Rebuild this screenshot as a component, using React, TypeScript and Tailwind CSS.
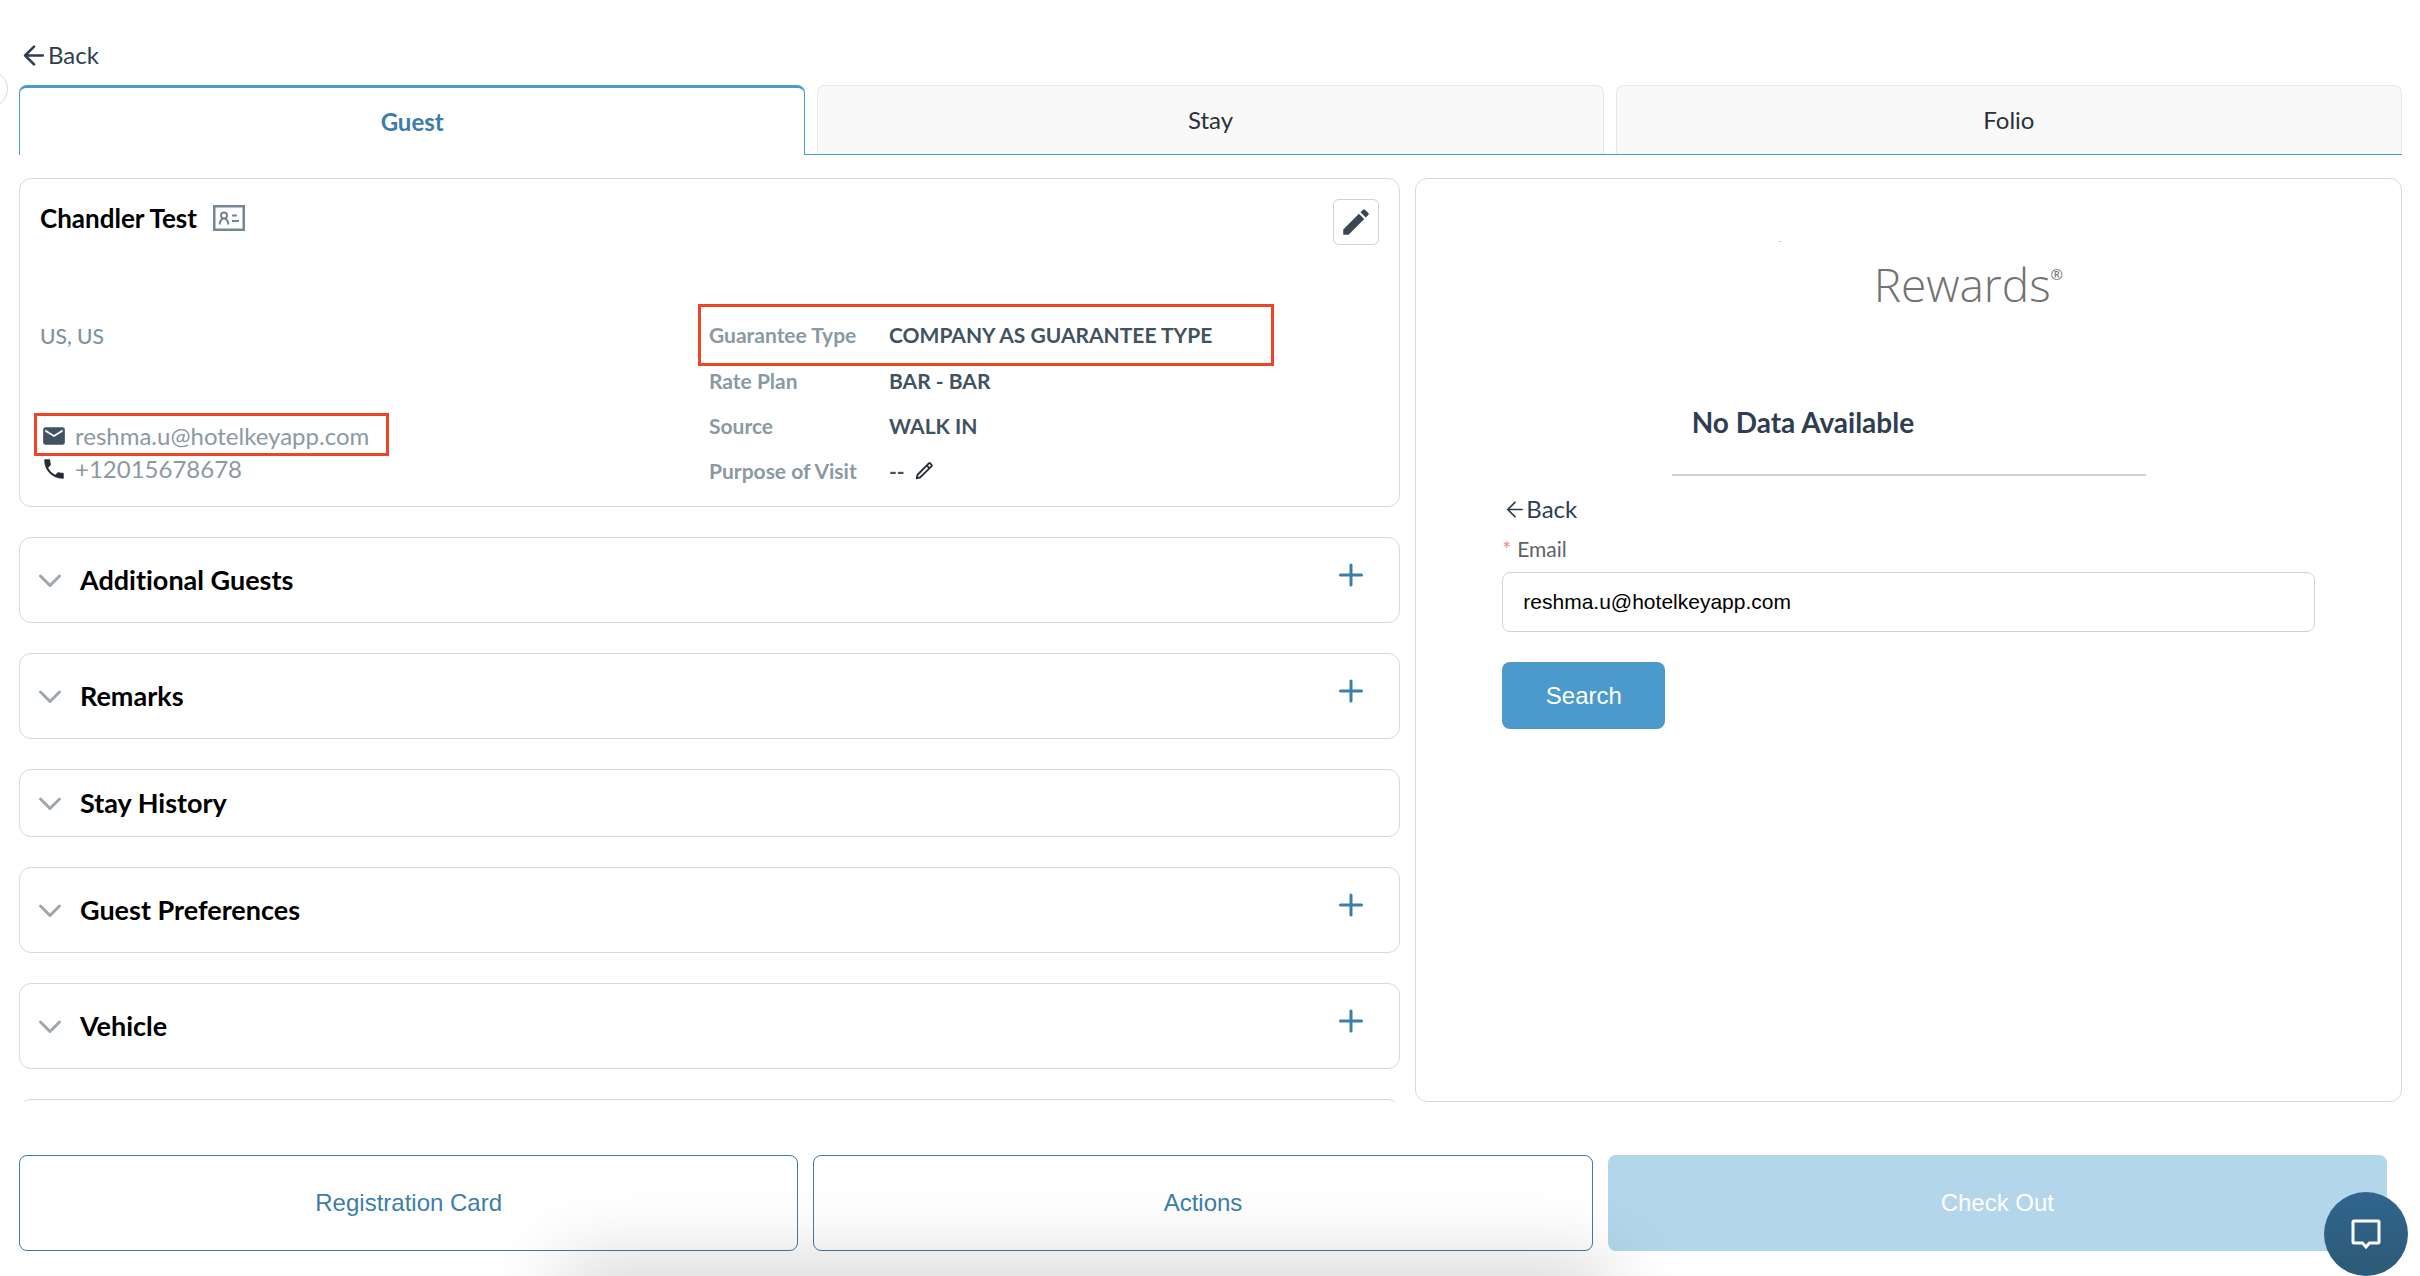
import { BiPencil } from "react-icons/bi";
import { MdEdit, MdEmail, MdPhone } from "react-icons/md";

const sections = [
  { title: "Additional Guests", canAdd: true },
  { title: "Remarks", canAdd: true },
  { title: "Stay History", canAdd: false },
  { title: "Guest Preferences", canAdd: true },
  { title: "Vehicle", canAdd: true },
];

const details = [
  { label: "Rate Plan", value: "BAR - BAR" },
  { label: "Source", value: "WALK IN" },
  { label: "Purpose of Visit", value: "--", editable: true },
];

function ArrowIcon({ size, weight }: { size: number; weight: number }) {
  return (
    <svg width={size} height={size} viewBox="0 0 20 20" fill="none" stroke="currentColor" strokeWidth={weight} strokeLinecap="round" strokeLinejoin="round" aria-hidden="true">
      <path d="M10.500 1.500 2 10l8.500 8.500M2 10h17" />
    </svg>
  );
}

function IdCardIcon() {
  return (
    <svg width="32" height="26" viewBox="0 0 32 26" fill="none" stroke="#748691" strokeWidth="2" aria-hidden="true">
      <rect x="1" y="1" width="30" height="24" strokeWidth="3" />
      <circle cx="11" cy="10.500" r="3" />
      <path d="M6.500 19.500c.5-3.500 2-6 4.500-6s4 2.500 4.500 6M19 10.500h5M19 16h7" />
    </svg>
  );
}

function ChevronIcon() {
  return (
    <svg width="24" height="16" viewBox="0 0 24 16" fill="none" stroke="#9ba8ad" strokeWidth="3" strokeLinecap="round" strokeLinejoin="round" aria-hidden="true">
      <path d="M2.500 4 12 13.500 21.500 4" />
    </svg>
  );
}

function PlusIcon() {
  return (
    <svg width="24" height="24" viewBox="0 0 24 24" stroke="#3c7ea9" strokeWidth="3" strokeLinecap="round" aria-hidden="true">
      <path d="M12 2v20M1.500 12h21" />
    </svg>
  );
}

function Section({ title, canAdd }: { title: string; canAdd: boolean }) {
  return (
    <section
      className={`flex shrink-0 items-center rounded-xl border border-[#d9d9d9] pl-[18px] pr-9 ${canAdd ? "h-[86px]" : "h-[68px]"}`}
    >
      <button type="button" className="flex flex-1 items-center gap-[18px] text-left text-[27px] leading-8 font-bold text-black">
        <ChevronIcon />
        <span>{title}</span>
      </button>
      {canAdd && (
        <button type="button" aria-label={`Add ${title}`} className="pb-[10px]">
          <PlusIcon />
        </button>
      )}
    </section>
  );
}

function GuestCard() {
  return (
    <section className="shrink-0 rounded-xl border border-[#d9d9d9] px-5 pt-5 pb-5">
      <div className="flex h-[105px] items-start justify-between">
        <div className="flex items-center gap-4 pt-[3px]">
          <h1 className="text-[26px] leading-8 font-bold text-black">Chandler Test</h1>
          <IdCardIcon />
        </div>
        <button type="button" aria-label="Edit guest" className="flex size-[46px] items-center justify-center rounded-md border border-[#cfd5d9] text-[#3d4752]">
          <MdEdit size={34} />
        </button>
      </div>

      <div className="flex">
        <div className="w-[658px] text-[#8a9aa3]">
          <p className="pt-4 text-[21px] leading-8 font-medium text-[#82929c]">US, US</p>
          <div className="mt-[61px] -ml-[6px] flex h-[43px] w-[355px] items-center gap-2 border-3 border-[#ee4427] pt-[2px] pl-1 text-[24px] leading-8">
            <MdEmail size={26} className="text-[#3f5361]" />
            <a href="mailto:reshma.u@hotelkeyapp.com">reshma.u@hotelkeyapp.com</a>
          </div>
          <div className="flex items-center gap-2 pl-[1px] text-[24px] leading-[26px]">
            <MdPhone size={26} className="text-[#252d38]" />
            <a href="tel:+12015678678">+12015678678</a>
          </div>
        </div>

        <dl className="w-[576px] text-[21px] leading-[30px] font-bold text-[#3f5361]">
          <div className="flex h-[62px] items-center border-3 border-[#ee4427] pl-2">
            <dt className="w-[180px] text-[#8a9aa3]">Guarantee Type</dt>
            <dd>COMPANY AS GUARANTEE TYPE</dd>
          </div>
          <div className="flex flex-col gap-[15px] pl-[11px]">
            {details.map((item) => (
              <div key={item.label} className="flex items-center">
                <dt className="w-[180px] text-[#8a9aa3]">{item.label}</dt>
                <dd className="flex items-center gap-2">
                  {item.value}
                  {item.editable && (
                    <button type="button" aria-label="Edit purpose of visit">
                      <BiPencil size={22} className="text-[#252d38]" />
                    </button>
                  )}
                </dd>
              </div>
            ))}
          </div>
        </dl>
      </div>
    </section>
  );
}

function RewardsPanel() {
  return (
    <aside className="rounded-xl border border-[#d9d9d9] px-[86px] pt-[62px]">
      <div className="mx-auto w-[474px]">
        <div className="ml-[106px] h-px w-1 bg-[#e9d5d8]" />
        <p className="mt-[14px] pl-[202px] font-['Open_Sans',sans-serif] text-[46px] leading-[56px] font-light text-[#737373]">
          Rewards<sup className="top-[-22px] text-[15px] font-normal">®</sup>
        </p>
        <div className="mt-[92px] border-b-2 border-[#ccd4da] pb-[34px] pl-5">
          <h2 className="text-[28px] leading-9 font-bold text-[#2e3e50]">No Data Available</h2>
        </div>
      </div>

      <button type="button" className="mt-[17px] flex items-center gap-[3px] pl-1 text-[24px] leading-8 text-[#2e3e50]">
        <ArrowIcon size={17} weight={2} />
        Back
      </button>
      <form onSubmit={(e) => e.preventDefault()}>
        <label htmlFor="email" className="mt-2 block text-[21px] leading-8 text-[#5f6366]">
          <span className="mr-[6px] text-[#f28b82]">*</span>Email
        </label>
        <input
          id="email"
          type="email"
          defaultValue="reshma.u@hotelkeyapp.com"
          className="mt-[7px] block h-[60px] w-full rounded-lg border border-[#d2d5d7] px-5 font-['Liberation_Sans',sans-serif] text-[21px] text-black"
        />
        <button type="submit" className="mt-[30px] h-[67px] w-[163px] rounded-lg bg-[#4c9acc] font-['Liberation_Sans',sans-serif] text-[24px] text-white">
          Search
        </button>
      </form>
    </aside>
  );
}

export default function App() {
  return (
    <div className="relative flex h-screen flex-col overflow-hidden bg-white pt-[35px] pl-[19px] pr-[18px] font-[Lato,sans-serif] [font-variant-ligatures:none]">
      {/* edge of the collapsed side menu toggle */}
      <div className="absolute top-[71px] -left-[28px] size-9 rounded-full border border-[#d9d9d9]" />

      <header>
        <button type="button" className="flex items-center gap-1 pl-1 text-[24px] leading-10 text-[#2e3e50]">
          <ArrowIcon size={21} weight={2.4} />
          Back
        </button>
      </header>

      <nav className="mt-[10px] flex h-[70px] text-[24px]">
        <button type="button" className="w-[calc((100%-24px)/3)] rounded-t-lg border-x border-t-3 border-[#4c9acc] font-bold text-[#3c7ea9]">
          Guest
        </button>
        <div className="flex flex-1 gap-3 border-b border-[#4c9acc] pl-3">
          <button type="button" className="flex-1 rounded-t-lg border border-b-0 border-[#e8e8e8] bg-[#f9f9f9] text-[#2b3138]">
            Stay
          </button>
          <button type="button" className="flex-1 rounded-t-lg border border-b-0 border-[#e8e8e8] bg-[#f9f9f9] text-[#2b3138]">
            Folio
          </button>
        </div>
      </nav>

      <main className="mt-[23px] grid min-h-0 flex-1 grid-cols-[minmax(0,7fr)_minmax(0,5fr)] gap-[15px]">
        <div className="flex min-h-0 flex-col gap-[30px] overflow-hidden">
          <GuestCard />
          {sections.map((section) => (
            <Section key={section.title} {...section} />
          ))}
          <div className="h-[86px] shrink-0 rounded-xl border border-[#d9d9d9]" />
        </div>
        <RewardsPanel />
      </main>

      <footer className="mt-[53px] mb-[25px] mr-[15px] grid h-24 shrink-0 grid-cols-3 gap-[15px] font-['Liberation_Sans',sans-serif] text-[24px] text-[#3c7ea9]">
        <button type="button" className="rounded-lg border border-[#3c7ea9]">Registration Card</button>
        <button type="button" className="rounded-lg border border-[#3c7ea9]">Actions</button>
        <button type="button" disabled className="rounded-lg bg-[#b3d6ea] text-white">Check Out</button>
      </footer>

      <div className="pointer-events-none absolute top-full right-[820px] left-[570px] h-10 shadow-[0_0_80px_10px_rgba(0,0,0,0.2)]" />

      <button type="button" aria-label="Open chat" className="absolute right-3 bottom-0 flex size-[84px] items-center justify-center rounded-full bg-linear-to-b from-[#31658e] to-[#2c5a76]">
        <svg width="32" height="32" viewBox="0 0 32 32" fill="none" stroke="white" strokeWidth="3" aria-hidden="true">
          <path d="M4 3h24a1 1 0 0 1 1 1v20a1 1 0 0 1-1 1h-8.500L16 29l-3.500-4H4a1 1 0 0 1-1-1V4a1 1 0 0 1 1-1Z" />
        </svg>
      </button>
    </div>
  );
}
